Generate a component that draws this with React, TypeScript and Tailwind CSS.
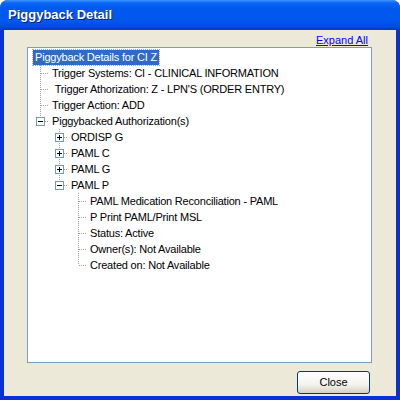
import React from 'react'

type Row = {
  text: string
  level: number
  last?: boolean
  expander?: '+' | '-'
  cont: boolean[]
}

const rows: Row[] = [
  { text: 'Trigger Systems: CI - CLINICAL INFORMATION', level: 1, cont: [] },
  { text: ' Trigger Athorization: Z - LPN\'S (ORDER ENTRY)', level: 1, cont: [] },
  { text: 'Trigger Action: ADD', level: 1, cont: [] },
  { text: 'Piggybacked Authorization(s)', level: 1, last: true, expander: '-', cont: [] },
  { text: 'ORDISP G', level: 2, expander: '+', cont: [false] },
  { text: 'PAML C', level: 2, expander: '+', cont: [false] },
  { text: 'PAML G', level: 2, expander: '+', cont: [false] },
  { text: 'PAML P', level: 2, last: true, expander: '-', cont: [false] },
  { text: 'PAML Medication Reconciliation - PAML', level: 3, cont: [false, false] },
  { text: 'P Print PAML/Print MSL', level: 3, cont: [false, false] },
  { text: 'Status: Active', level: 3, cont: [false, false] },
  { text: 'Owner(s): Not Available', level: 3, cont: [false, false] },
  { text: 'Created on: Not Available', level: 3, last: true, cont: [false, false] },
]

const dot = { stroke: '#a0a0a0', strokeWidth: 1, strokeDasharray: '1 1' }

function Connector({ last, expander }: { last?: boolean; expander?: '+' | '-' }) {
  return (
    <svg width="19" height="16" className="shrink-0">
      <line x1="10.5" y1="0" x2="10.5" y2={last ? 8 : 16} {...dot} />
      <line x1="11" y1="8.5" x2="19" y2="8.5" {...dot} />
      {expander && (
        <g>
          <rect x="6.5" y="4.5" width="8" height="8" fill="#fff" stroke="#7898b5" />
          <line x1="8" y1="8.5" x2="13" y2="8.5" stroke="#000" />
          {expander === '+' && <line x1="10.5" y1="6" x2="10.5" y2="11" stroke="#000" />}
        </g>
      )}
    </svg>
  )
}

function Pipe({ on }: { on: boolean }) {
  return (
    <svg width="19" height="16" className="shrink-0">
      {on && <line x1="10.5" y1="0" x2="10.5" y2="16" {...dot} />}
    </svg>
  )
}

export default function App() {
  return (
    <div className="w-[400px] h-[400px] flex flex-col bg-[#0831d9] rounded-t-[8px] overflow-hidden font-['Liberation_Sans',Arial,sans-serif]">
      <div className="h-[30px] shrink-0 flex items-center pl-[8px] bg-[linear-gradient(to_bottom,#3d95ff_0%,#0a66f5_10%,#0058ee_30%,#0058ee_70%,#004ae0_90%,#0039c8_100%)]">
        <span className="text-white font-bold text-[13px] [text-shadow:1px_1px_0_#0a1f7a]">Piggyback Detail</span>
      </div>
      <div className="flex-1 mx-[4px] mb-[4px] bg-[#ece9d8] flex flex-col">
        <div className="h-[17px] flex items-end justify-end pr-[28px]">
          <a className="text-[#0000ff] underline text-[11px] leading-[14px] cursor-pointer">Expand All</a>
        </div>
        <div className="ml-[23px] mr-[24px] h-[316px] border border-[#7f9db9] bg-white pt-[1px] text-[11px] tracking-[-0.2px] text-black">
          <div className="h-[16px] flex items-center pl-[5px]">
            <span className="bg-[#316ac5] text-white px-[2px] h-[15px] leading-[15px] outline-1 outline-dotted outline-[#e0a040]">
              Piggyback Details for CI Z
            </span>
          </div>
          {rows.map((r, i) => (
            <div key={i} className="h-[16px] flex items-center pl-[2px]">
              {r.cont.map((c, j) => (
                <Pipe key={j} on={c} />
              ))}
              <Connector last={r.last} expander={r.expander} />
              <span className="ml-[3px] leading-[16px] whitespace-pre">{r.text}</span>
            </div>
          ))}
        </div>
        <div className="flex justify-end pt-[8px] pr-[26px]">
          <button className="w-[73px] h-[23px] rounded-[3px] border border-[#003c74] bg-[linear-gradient(to_bottom,#ffffff_0%,#f4f3ee_60%,#d6d0c5_100%)] text-[11px] text-black">
            Close
          </button>
        </div>
      </div>
    </div>
  )
}
